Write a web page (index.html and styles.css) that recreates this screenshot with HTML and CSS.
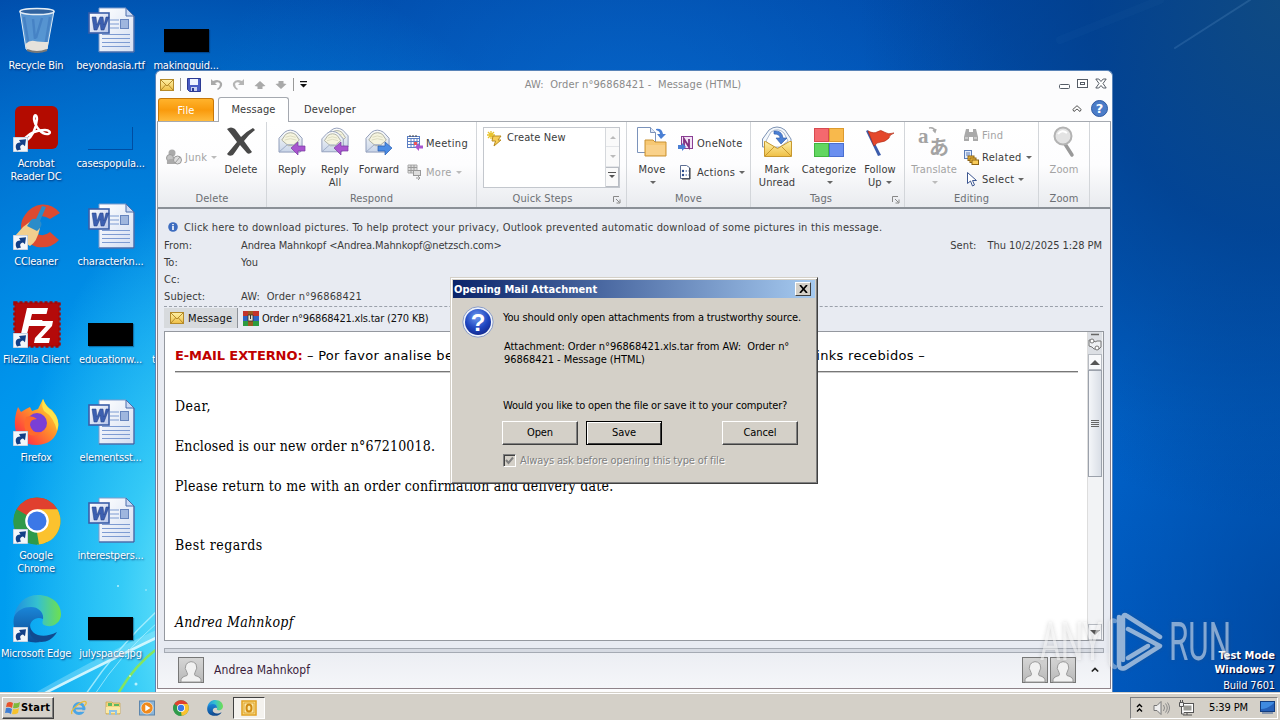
FILE: index.html
```html
<!DOCTYPE html>
<html lang="en">
<head>
<meta charset="utf-8">
<title>Desktop</title>
<link rel="stylesheet" href="styles.css">
</head>
<body>
<svg class="defs" aria-hidden="true">
  <defs>
    <linearGradient id="gPaper" x1="0" y1="0" x2="1" y2="1"><stop offset="0" stop-color="#fff"/><stop offset="1" stop-color="#d3def2"/></linearGradient>
    <linearGradient id="gW" x1="0" y1="0" x2="1" y2="1"><stop offset="0" stop-color="#fff"/><stop offset="1" stop-color="#b7c6ea"/></linearGradient>
    <linearGradient id="gEnv" x1="0" y1="0" x2="0" y2="1"><stop offset="0" stop-color="#fdfdfa"/><stop offset="1" stop-color="#c9d5e8"/></linearGradient>
    <linearGradient id="gYel" x1="0" y1="0" x2="0" y2="1"><stop offset="0" stop-color="#fdf0a8"/><stop offset="1" stop-color="#efbf45"/></linearGradient>
    <linearGradient id="gPer" x1="0" y1="0" x2="0" y2="1"><stop offset="0" stop-color="#d6d6d6"/><stop offset="1" stop-color="#b8b8b8"/></linearGradient>
    <linearGradient id="gFf" x1="1" y1="0" x2="0" y2="1"><stop offset="0" stop-color="#fff04a"/><stop offset=".4" stop-color="#ff9a2a"/><stop offset=".75" stop-color="#ff4a3a"/><stop offset="1" stop-color="#e31587"/></linearGradient>
    <linearGradient id="gEdge" x1="0" y1="0" x2="1" y2="0"><stop offset="0" stop-color="#1f8fe0"/><stop offset=".5" stop-color="#35c1cf"/><stop offset="1" stop-color="#6fe04e"/></linearGradient>
    <linearGradient id="gEdge2" x1="0" y1="0" x2="0" y2="1"><stop offset="0" stop-color="#1a86d8"/><stop offset="1" stop-color="#0d4a92"/></linearGradient>
    <radialGradient id="gQ" cx=".45" cy=".3" r=".75"><stop offset="0" stop-color="#6f9bf0"/><stop offset=".6" stop-color="#1e46c0"/><stop offset="1" stop-color="#12268a"/></radialGradient>
    <symbol id="shortcut" viewBox="0 0 15 15"><rect width="15" height="15" fill="#f2f6fa" stroke="#9db4cf"/><path d="M4 13.500C1 8 4 5 7.500 5.500L6 3l7-.8-1 7-2-1.700C7 8 6.500 10 8 12.500z" fill="#123f86"/></symbol>
    <symbol id="word" viewBox="0 0 48 48">
      <path d="M11 1h27l8 8v36H11z" fill="url(#gPaper)" stroke="#7f9ccb"/><path d="M38 1v8h8z" fill="#c9d9f4" stroke="#4c6da9"/>
      <path d="M46 9v36H11" fill="none" stroke="#35599c"/>
      <path d="M22 13h9M22 17h9M22 21h9M14 27.500h28M14 31.500h28M14 35.500h28M14 39.500h28" stroke="#7d9bd2"/>
      <rect x="32.500" y="12.500" width="8" height="9" fill="#9fb6de" stroke="#6684bd"/>
      <rect x="1" y="6" width="20" height="20" fill="url(#gW)" stroke="#3b5ea8" stroke-width="1.600"/>
      <path d="M4 10h4l1 8 3-8h3l1 8 2-8h3l-5 13h-3l-1-7-3 7H6z" fill="#3c5fb0" stroke="#203f86" stroke-width=".5"/>
    </symbol>
    <symbol id="mail" viewBox="0 0 14 12"><rect x=".5" y=".5" width="13" height="11" fill="url(#gYel)" stroke="#b58a2a"/><path d="M1 1l6 6 6-6M1 11l4.500-5M13 11L8.500 6" fill="none" stroke="#b58a2a"/></symbol>
    <symbol id="env" viewBox="0 0 28 26"><path d="M1 10L7 3.500Q13-1 20 3.500l6 6.500v12l-2 3H1z" fill="url(#gEnv)" stroke="#8a97b5"/><path d="M4 12l4-6q5.500-4 11 0l4 6-7 6h-5z" fill="#f5f4df" stroke="#a9ab9d"/><path d="M8 9q5-3 11 0M7 12q6-3 13 0" stroke="#d9d8bd" fill="none"/><path d="M1 25l9-8h6l9 7" fill="none" stroke="#9aa8c4"/></symbol>
    <symbol id="person" viewBox="0 0 26 26"><rect x=".5" y=".5" width="25" height="25" fill="url(#gPer)" stroke="#777"/><path d="M3 25q-1-5 6-6.500 1-1 0-3-3-4-1-8Q13 2 18 7q2 4-1 8.500-1 2 0 3 7 1.500 6 6.500z" fill="#f1f1f1" stroke="#999"/></symbol>
    <symbol id="chrome" viewBox="0 0 48 48"><circle cx="24" cy="24" r="23.500" fill="#2f9a4a"/><path d="M24 24L3.600 12.300A23.500 23.500 0 0 1 44.400 12.300z" fill="#e0402f"/><path d="M24 24l20.400-11.700A23.500 23.500 0 0 1 24 47.500z" fill="#fbc22e"/><path d="M24 12.300h20.400l-9 17.500L24 47.500z" fill="#fbc22e"/><path d="M3.600 12.300L14 30l10 5.500 2 12A23.500 23.500 0 0 1 3.600 12.300z" fill="#2f9a4a"/><circle cx="24" cy="24" r="11.800" fill="#fff"/><circle cx="24" cy="24" r="9.500" fill="#3b78e7"/></symbol>
    <symbol id="edge" viewBox="0 0 48 48"><path d="M1 22C3 8 13 0 25 0c14 0 23 9 23 19 0 9-8 13-14 12-5-1-5-3-4-6 1-6-4-11-11-11C9 14 3 18 1 22z" fill="url(#gEdge)"/><path d="M1 22c3-7 10-10 17-10 8 0 13 6 12 12-6-3-13 1-13 8 0 8 4 13 11 15C10 50-2 38 1 22z" fill="url(#gEdge2)"/><path d="M17 30c0 9 12 15 27 7-4 7-10 10-16 10-8-1-14-9-11-17z" fill="#114a8f"/></symbol>
    <symbol id="launch" viewBox="0 0 8 8"><path d="M.5 6V.5H6" fill="none" stroke="#888"/><path d="M3 3l3.500 3.500M7 3.500V7H3.500" fill="none" stroke="#888"/></symbol>
  </defs>
</svg>

<main class="desktop">
  <svg class="wallpaper" viewBox="0 0 1280 692" preserveAspectRatio="none" aria-hidden="true">
    <g fill="none" stroke-linecap="round">
      <path d="M40 694Q110 655 156 634" stroke="#c8f5ff" stroke-width="7" opacity=".3"/>
      <path d="M45 693Q110 660 156 638" stroke="#e4fbff" stroke-width="2.500" opacity=".85"/>
      <path d="M86 694Q115 650 158 610" stroke="#b6f2ff" stroke-width="1.500" opacity=".8"/>
      <path d="M95 694Q120 655 158 622" stroke="#b6f2ff" stroke-width="1" opacity=".7"/>
      <path d="M119 692Q135 665 158 648" stroke="#8de84e" stroke-width="2.500" opacity=".9"/>
      <path d="M1175 48L1250 0" stroke="#8cc0ee" stroke-width="2" opacity=".16"/>
      <path d="M1060 40Q1110 20 1160 0" stroke="#8cc0ee" stroke-width="8" opacity=".03"/>
    </g>
    <g fill="#d9fbff" opacity=".8"><circle cx="118" cy="586" r="1"/><circle cx="136" cy="684" r="1.500"/><circle cx="146" cy="590" r=".8"/><circle cx="130" cy="676" r="1"/></g>
  </svg>

  <div class="icons">
    <div class="cell"><svg class="ico" viewBox="0 0 48 48"><path d="M7 4l6 38q11 6 21 0l7-38z" fill="#9cc7e8" fill-opacity=".55" stroke="#dceaf5"/><path d="M11 10l5 30M37 10l-5 30M20 12l2 20M29 11l-6 20" stroke="#3a75bc" stroke-width="2.500" opacity=".55"/><path d="M12.500 37q4-4 9-3t14 1l-1 7q-11 6-21 0z" fill="#e5e2dc"/><path d="M14 43q10 4 20 0" stroke="#777" fill="none" stroke-width="2"/><ellipse cx="24" cy="4.500" rx="17" ry="3" fill="#31639f" stroke="#e4edf5" stroke-width="1.500"/></svg><span>Recycle Bin</span></div>
    <div class="cell"><svg class="ico"><use href="#word"/></svg><span>beyondasia.rtf</span></div>
    <div class="cell"><i class="thumb"></i><span>makingguid...</span></div>

    <div class="cell"><svg class="ico" viewBox="0 0 48 48"><rect x="2" y="1" width="43" height="43" rx="6" fill="#b30b00"/><path d="M13 36c6-4 10-13 11-22 0-5-3-5-3 0 1 8 8 16 14 15 4-1 1-4-3-4-7 0-15 3-20 8-3 4-1 5 1 3z" fill="none" stroke="#fff" stroke-width="2.400"/><use href="#shortcut" x="0" y="32" width="15" height="15"/></svg><span>Acrobat<br>Reader DC</span></div>
    <div class="cell"><i class="thumb ghost"></i><span>casespopula...</span></div>
    <div class="cell"></div>

    <div class="cell"><svg class="ico" viewBox="0 0 48 48"><path d="M47 10A21 21 0 0 0 12 12C4 22 8 40 24 44q14 2 22-7l-9-8q-7 6-14 1-6-6-1-13 6-7 15-1z" fill="#dc4a31"/><path d="M10 24l8-6 9 7q-3 14-10 18L2 33z" fill="#f2cf8e"/><path d="M14 23l4-6q2-2 5-1l6-13 4 1-6 14q3 3 0 7l-3 3z" fill="#2b8cc9"/><use href="#shortcut" x="0" y="32" width="15" height="15"/></svg><span>CCleaner</span></div>
    <div class="cell"><svg class="ico"><use href="#word"/></svg><span>characterkn...</span></div>
    <div class="cell"></div>

    <div class="cell"><svg class="ico" viewBox="0 0 48 48"><rect x="1.500" y="1.500" width="45" height="44" fill="#b40a0a" stroke="#a30707" stroke-width="2.500" stroke-dasharray="3 2"/><path d="M14 7h21l-1.500 6H19l-1.500 6h12L28 25H16l-3 12H7z" fill="#fff"/><path d="M24 20h16l-1 5-11 12h9l-1 5H21l1-5 11-12H23z" fill="#fff"/><use href="#shortcut" x="0" y="32" width="15" height="15"/></svg><span>FileZilla Client</span></div>
    <div class="cell"><i class="thumb"></i><span>educationw...</span></div>
    <div class="cell"><span class="tail">t</span></div>

    <div class="cell"><svg class="ico" viewBox="0 0 48 48"><path d="M5 8l3 5 5-3 4-2 2 4 6-2 5-10q3 8 9 11 8 9 6 18-3 16-21 17Q4 46 2 28 1 18 5 8z" fill="url(#gFf)"/><circle cx="24" cy="24" r="10" fill="#7a3fd6"/><path d="M13 18q6-2 11 2-7 0-7 6 2 9 12 7-7 6-14 2-6-5-2-17z" fill="#ff6a2c"/><path d="M30 0q3 8 9 12 9 9 5 20-3-14-13-20-3-5-1-12z" fill="#ffe34a"/><use href="#shortcut" x="0" y="32" width="15" height="15"/></svg><span>Firefox</span></div>
    <div class="cell"><svg class="ico"><use href="#word"/></svg><span>elementsst...</span></div>
    <div class="cell"></div>

    <div class="cell"><svg class="ico" viewBox="0 0 48 48"><use href="#chrome" width="48" height="48"/><use href="#shortcut" x="0" y="32" width="15" height="15"/></svg><span>Google<br>Chrome</span></div>
    <div class="cell"><svg class="ico"><use href="#word"/></svg><span>interestpers...</span></div>
    <div class="cell"></div>

    <div class="cell"><svg class="ico" viewBox="0 0 48 48"><use href="#edge" width="48" height="48"/><use href="#shortcut" x="0" y="32" width="15" height="15"/></svg><span>Microsoft Edge</span></div>
    <div class="cell"><i class="thumb"></i><span>julyspace.jpg</span></div>
    <div class="cell"></div>
  </div>

  <div class="build"><b>Test Mode</b><b>Windows 7</b><span>Build 7601</span></div>

  <section class="window">
    <header class="titlebar">
      <div class="qat">
        <svg width="14" height="12"><use href="#mail"/></svg>
        <i class="sep"></i>
        <svg width="14" height="14" viewBox="0 0 14 14"><path d="M.5.5h13v13h-11l-2-2z" fill="#4a5cc4" stroke="#2b3a94"/><path d="M3 1h8v6H3z" fill="#eef2ff"/><path d="M4 9h6v4H4z" fill="#c8cff0"/><path d="M5 10h2v3H5z" fill="#2b3a94"/></svg>
        <svg width="13" height="13" viewBox="0 0 13 13"><path d="M1 1v6h6L5 5q4-2 5 1 0 3-3 5l1 1q5-3 4-7-3-5-9-2z" fill="#a9a9a9"/></svg>
        <svg width="13" height="13" viewBox="0 0 13 13"><path d="M12 1v6H6l2-2Q4 3 3 6q0 3 3 5l-1 1Q0 9 1 5q3-5 9-2z" fill="#b5b5b5"/></svg>
        <svg width="12" height="10" viewBox="0 0 12 10"><path d="M6 1l5.500 5-3 .5V9h-5V6.500L.5 6z" fill="#a9a9a9"/></svg>
        <svg width="12" height="10" viewBox="0 0 12 10"><path d="M6 9l5.500-5-3-.5V1h-5v2.500L.5 4z" fill="#a9a9a9"/></svg>
        <i class="sep"></i>
        <svg width="7" height="7" viewBox="0 0 7 7"><path d="M0 0h7v1.300H0zM0 3h7L3.500 6.500z" fill="#111"/></svg>
      </div>
      <div class="title">AW:&nbsp; Order n°96868421 -&nbsp; Message (HTML)</div>
      <div class="winbtns">
        <svg width="11" height="12" viewBox="0 0 11 12"><rect x=".5" y="6.500" width="10" height="4" rx="1" fill="#fff" stroke="#555c66"/></svg>
        <svg width="11" height="12" viewBox="0 0 11 12"><rect x=".5" y="1.500" width="10" height="8" fill="#fff" stroke="#555c66"/><rect x="3.500" y="4.500" width="4" height="2" fill="#fff" stroke="#555c66"/></svg>
        <svg width="12" height="12" viewBox="0 0 12 12"><path d="M.8 1h3L6 3.500 8.200 1h3L8 5.500 11.200 10h-3L6 7.500 3.800 10h-3L4 5.500z" fill="#fff" stroke="#555c66"/></svg>
      </div>
    </header>

    <nav class="tabs">
      <span class="tab file">File</span><span class="tab active">Message</span><span class="tab">Developer</span>
      <span class="tabtools">
        <svg width="10" height="8" viewBox="0 0 10 8"><path d="M5 .7L9.200 4.500 8 6.500 5 4 2 6.500.8 4.500z" fill="#fff" stroke="#555"/></svg>
        <svg width="17" height="17" viewBox="0 0 17 17"><circle cx="8.500" cy="8.500" r="8" fill="#4b7cc8" stroke="#2f5aa2"/><text x="8.500" y="13" class="qmark">?</text></svg>
      </span>
    </nav>

    <div class="ribbon">
      <div class="group g-delete">
        <div class="tools">
          <div class="col mid"><div class="small off"><svg width="16" height="16" viewBox="0 0 16 16"><circle cx="6" cy="4" r="3.500" fill="#aaa"/><circle cx="4" cy="9" r="3.500" fill="#c4c4c4" stroke="#999"/><path d="M1 15q-1-5 4-5 4 0 4 5z" fill="#aaa"/><circle cx="11.500" cy="11" r="4" fill="#ddd" stroke="#999"/><path d="M9 14l5-6" stroke="#999"/></svg><span>Junk</span><i class="arr"></i></div></div>
          <div class="big w46"><svg width="32" height="32" viewBox="0 0 32 32"><path d="M2 3q4-3 8 0l6 8q6-6 12-9l2 2q-7 5-11 11 5 7 8 11-3 3-5 1l-7-8q-4 6-7 10-4 2-6-1 5-6 10-12Q7 9 2 3z" fill="#484848"/></svg><span>Delete</span></div>
        </div>
        <div class="cap">Delete</div>
      </div>
      <div class="group g-respond">
        <div class="tools">
          <div class="big w42"><svg width="32" height="32" viewBox="0 0 32 32"><use href="#env" x="2" y="3" width="26" height="24"/><path d="M15 22l7-6v4h7v5h-7v4z" fill="#a955cf" stroke="#7a3aa0" stroke-width=".7"/></svg><span>Reply</span></div>
          <div class="big w44"><svg width="32" height="32" viewBox="0 0 32 32"><use href="#env" x="6" y="1" width="25" height="23"/><use href="#env" x="2" y="4" width="24" height="23"/><path d="M15 22l7-6v4h7v5h-7v4z" fill="#a955cf" stroke="#7a3aa0" stroke-width=".7"/></svg><span>Reply<br>All</span></div>
          <div class="big w44"><svg width="32" height="32" viewBox="0 0 32 32"><use href="#env" x="2" y="3" width="26" height="24"/><path d="M29 22l-7-6v4h-7v5h7v4z" fill="#4b8ce4" stroke="#2a5db0" stroke-width=".7"/></svg><span>Forward</span></div>
          <div class="col two"><div class="small"><svg width="16" height="16" viewBox="0 0 16 16"><rect x=".5" y="1.500" width="12" height="11" fill="#fff" stroke="#5b7fc4"/><path d="M1 3.500h12M1 6.500h12M1 9.500h12M4 3v10M7 3v10M10 3v10" stroke="#5b7fc4"/><path d="M3 0v2M6 0v2M9 0v2" stroke="#444"/><rect x="7" y="7" width="3" height="3" fill="#e55"/><path d="M8 12l4-4v2.500h4v3h-4V16z" fill="#a955cf"/></svg><span>Meeting</span></div><div class="small off"><svg width="16" height="16" viewBox="0 0 16 16"><path d="M1 1h9v8H1z" fill="#ddd" stroke="#aaa"/><path d="M1 3.500h9M1 6.500h9M4 1v8M7 1v8" stroke="#999"/><rect x="6.500" y="6.500" width="7" height="5" fill="#ddd" stroke="#999"/><path d="M9 14h4M11 12l2 2-2 2" stroke="#999" fill="none"/></svg><span>More</span><i class="arr"></i></div></div>
        </div>
        <div class="cap">Respond</div>
      </div>
      <div class="group g-quick">
        <div class="gallery"><div class="gitem"><svg width="16" height="16" viewBox="0 0 16 16"><path d="M4 0v8M0 4h8M1 1l6 6M7 1L1 7" stroke="#e8c32c" stroke-width="1.300"/><path d="M6 5h8l-3 4h3l-7 6 1.500-5H5z" fill="#f7ce58" stroke="#b98c20"/></svg><span>Create New</span></div>
          <div class="gbar"><b><i class="up"></i></b><b><i class="dn"></i></b><b><i class="more"></i></b></div></div>
        <div class="cap">Quick Steps<svg class="launch" width="8" height="8"><use href="#launch"/></svg></div>
      </div>
      <div class="group g-move">
        <div class="tools">
          <div class="big w40"><svg width="32" height="32" viewBox="0 0 32 32"><path d="M1.500 1.500h13l5 5v20h-18z" fill="#fff" stroke="#7b93bb"/><path d="M14.500 1.500v5h5" fill="#dfe8f6" stroke="#7b93bb"/><path d="M20 3q6-1 7 5h3l-5 5-4-5h3q0-3-4-4z" fill="#4a7fd4"/><path d="M9 14h8l2 2h11v14H9z" fill="#f7c873" stroke="#c99234"/><path d="M10 19h19v10H10z" fill="#f9d18a"/></svg><span>Move</span><i class="arr"></i></div>
          <div class="col two"><div class="small"><svg width="16" height="16" viewBox="0 0 16 16"><rect x="3.500" y="1.500" width="11" height="12" fill="#f3e3f6" stroke="#8a3f94"/><path d="M6 12V4l5 8V4" fill="none" stroke="#80307f" stroke-width="1.800"/><path d="M0 10h4V8l4 4-4 4v-2H0z" fill="#4a7fd4"/></svg><span>OneNote</span></div><div class="small"><svg width="16" height="16" viewBox="0 0 16 16"><path d="M2.500 1.500h6l3 2v11h-9z" fill="#fff" stroke="#5c6f94"/><circle cx="5" cy="7" r="1.200" fill="#2a4b8d"/><circle cx="5" cy="11" r="1.200" fill="#2a4b8d"/><path d="M7.500 7h3M7.500 11h3" stroke="#2a4b8d" stroke-dasharray="1.500 1"/><path d="M12 4v11H4" stroke="#333" fill="none"/></svg><span>Actions</span><i class="arr"></i></div></div>
        </div>
        <div class="cap">Move</div>
      </div>
      <div class="group g-tags">
        <div class="tools">
          <div class="big w44"><svg width="32" height="32" viewBox="0 0 32 32"><path d="M1.500 13L8 4q8-6 16 0l6 9v8H1.500z" fill="#f4f8fc" stroke="#7e93b4"/><path d="M5 15l5-9q7-5 13 1l4 8-8 6h-8z" fill="#fff" stroke="#aebbd0"/><path d="M13 5q8-1 9 7h4l-6 6-5-6h4q0-4-6-4z" fill="#4a7fd4" stroke="#2c57a5" stroke-width=".6"/><path d="M3.500 15.500h1l12 7 12-7h2v15h-27z" fill="url(#gYel)" stroke="#c7982f"/><path d="M4 30l9-9M30 30l-9-9" stroke="#c7982f"/></svg><span>Mark<br>Unread</span></div>
          <div class="big w60"><svg width="32" height="32" viewBox="0 0 32 32"><rect x="1.500" y="2.500" width="14" height="13" fill="#f4696e" stroke="#d84a50"/><rect x="16.500" y="2.500" width="14" height="13" fill="#f8b94c" stroke="#dd9a2e"/><rect x="1.500" y="17.500" width="14" height="13" fill="#62d660" stroke="#42b440"/><rect x="16.500" y="17.500" width="14" height="13" fill="#6a8ff0" stroke="#4a6fd0"/></svg><span>Categorize</span><i class="arr"></i></div>
          <div class="big w42"><svg width="32" height="32" viewBox="0 0 32 32"><path d="M2 5l2-1 13 25-3 1z" fill="#3c5cab"/><path d="M4 5q6 3 9 1 4-3 7 0 4 3 10 1-5 2-5 5-4 4-8 4-4 0-7 4z" fill="#e4472b" stroke="#b32c16" stroke-width=".7"/></svg><span>Follow<br>Up <i class="arr inl"></i></span></div>
        </div>
        <div class="cap">Tags<svg class="launch" width="8" height="8"><use href="#launch"/></svg></div>
      </div>
      <div class="group g-edit">
        <div class="tools">
          <div class="big w52 off"><svg width="32" height="32" viewBox="0 0 32 32"><text x="0" y="17" class="tra">a</text><text x="11" y="29" class="trj">あ</text><path d="M11 2q5-1 6 3M15 4l2 2 1-3" stroke="#aaa" fill="none" stroke-width="1.500"/></svg><span>Translate</span><i class="arr"></i></div>
          <div class="col three"><div class="small off"><svg width="16" height="16" viewBox="0 0 16 16"><path d="M3 2h3v3h4V2h3l2 8v4h-5v-4H6v4H1v-4z" fill="#a9a9a9"/><path d="M2 11h3M11 11h3" stroke="#eee"/></svg><span>Find</span></div><div class="small"><svg width="16" height="16" viewBox="0 0 16 16"><rect x="1.500" y="1.500" width="7" height="8" fill="#e5eefb" stroke="#5c7db8"/><path d="M3 4h4M3 6h4" stroke="#5c7db8"/><rect x="5" y="7" width="6" height="4.500" fill="#f6bf3d" stroke="#8d6415"/><rect x="7" y="9" width="6" height="4.500" fill="#f6bf3d" stroke="#8d6415"/><rect x="9" y="11" width="6.500" height="4.500" fill="#f9cc5b" stroke="#8d6415"/></svg><span>Related</span><i class="arr"></i></div><div class="small"><svg width="16" height="16" viewBox="0 0 16 16"><path d="M4.500 1.500v11l3-2.500 2 5 2-1-2-4.500h4z" fill="#fff" stroke="#3d5690"/></svg><span>Select</span><i class="arr"></i></div></div>
        </div>
        <div class="cap">Editing</div>
      </div>
      <div class="group g-zoom">
        <div class="tools"><div class="big w50 off"><svg width="32" height="32" viewBox="0 0 32 32"><path d="M17 18l7 11" stroke="#999" stroke-width="3.500" stroke-linecap="round"/><circle cx="15" cy="10" r="8.500" fill="#e3e3e3" stroke="#b3b3b3" stroke-width="2"/><path d="M10 8q4-5 9-1" stroke="#fff" fill="none" stroke-width="2"/></svg><span>Zoom</span></div></div>
        <div class="cap">Zoom</div>
      </div>
    </div>

    <div class="mail">
      <div class="infobar"><svg width="10" height="10" viewBox="0 0 10 10"><circle cx="5" cy="5" r="4.800" fill="#3d6cbf"/><path d="M5 4v4M5 2v1.300" stroke="#fff" stroke-width="1.600"/></svg><span>Click here to download pictures. To help protect your privacy, Outlook prevented automatic download of some pictures in this message.</span></div>
      <div class="fields">
        <span>From:</span><div class="fromrow"><span class="addr">Andrea Mahnkopf &lt;Andrea.Mahnkopf@netzsch.com&gt;</span><span class="sent">Sent:</span><span class="date">Thu 10/2/2025 1:28 PM</span></div>
        <span>To:</span><span>You</span>
        <span>Cc:</span><span></span>
        <span>Subject:</span><span class="subj">AW:&nbsp; Order n°96868421</span>
      </div>
      <div class="attach">
        <div class="amsg"><svg width="14" height="12"><use href="#mail"/></svg><span>Message</span></div>
        <div class="afile"><svg width="16" height="15" viewBox="0 0 16 15"><path d="M0 0h16v5H0z" fill="#c2332c"/><path d="M0 5h16v5H0z" fill="#2e63c4"/><path d="M0 10h16v5H0z" fill="#2d9b40"/><path d="M5 0h5v15H5z" fill="#9c5a20"/><path d="M5 4h5v6H5z" fill="#e8e2cf" stroke="#333" stroke-width=".8"/><path d="M7.500 4v4" stroke="#333"/></svg><span>Order n°96868421.xls.tar (270 KB)</span></div>
      </div>
      <div class="bodybox">
        <article class="letter">
          <div class="warn"><span><b>E-MAIL EXTERNO:</b> – Por favor analise bem</span><span>os links recebidos –</span></div>
          <p class="p1">Dear,</p>
          <p class="p2">Enclosed is our new order n°67210018.</p>
          <p class="p3">Please return to me with an order confirmation and delivery date.</p>
          <p class="p4">Best regards</p>
          <p class="p5">Andrea Mahnkopf</p>
        </article>
        <aside class="scroll">
          <div class="shead"><svg width="14" height="20" viewBox="0 0 14 20"><path d="M3 2.500h8" stroke="#666" stroke-width="1.500"/><path d="M1 8h4l2 2 2-1h4v6l-2 2H6l-2-2-3-1z" fill="#eef0f3" stroke="#777"/><circle cx="4" cy="9" r="2" fill="#fff" stroke="#777"/><circle cx="9" cy="16" r="2" fill="#fff" stroke="#777"/></svg></div>
          <div class="sbtn"><i class="up"></i></div>
          <div class="sthumb"><i></i><i></i><i></i><i></i></div>
          <div class="strack"></div>
          <div class="sbtn"><i class="dn"></i></div>
        </aside>
      </div>
      <div class="splitter"></div>
      <div class="people">
        <svg width="26" height="26"><use href="#person"/></svg><span>Andrea Mahnkopf</span>
        <svg class="pr" width="26" height="26"><use href="#person"/></svg><svg width="26" height="26"><use href="#person"/></svg>
        <svg class="chev" width="8" height="6" viewBox="0 0 8 6"><path d="M.8 4.500L4 1.500l3.200 3" stroke="#222" stroke-width="1.700" fill="none"/></svg>
      </div>
    </div>
  </section>

  <section class="dialog">
    <header><b>Opening Mail Attachment</b><span class="close"><svg width="9" height="8" viewBox="0 0 9 8"><path d="M1 0l7 8M8 0L1 8" stroke="#000" stroke-width="1.700"/></svg></span></header>
    <div class="dbody">
      <svg class="q" width="32" height="32" viewBox="0 0 32 32"><circle cx="16" cy="16" r="15.200" fill="#eef2fa" stroke="#8b9cc4"/><circle cx="16" cy="16" r="13" fill="url(#gQ)"/><text x="16" y="25" class="bigq">?</text></svg>
      <div class="dtext">
        <p class="d1">You should only open attachments from a trustworthy source.</p>
        <p class="d2">Attachment: Order n°96868421.xls.tar from AW:&nbsp; Order n°<br>96868421 - Message (HTML)</p>
        <p class="d3">Would you like to open the file or save it to your computer?</p>
        <div class="btns"><span class="btn">Open</span><span class="btn def">Save</span><span class="btn last">Cancel</span></div>
        <div class="check"><span class="box"><svg width="9" height="9" viewBox="0 0 9 9"><path d="M1 4l2.500 3L8 1.500" stroke="#808080" stroke-width="2" fill="none"/></svg></span><span>Always ask before opening this type of file</span></div>
      </div>
    </div>
  </section>

  <svg class="mark" viewBox="0 0 200 70" width="200" height="70">
    <g class="marktext"><text x="5" y="52" textLength="62" lengthAdjust="spacingAndGlyphs">ANY</text><text x="134" y="52" textLength="62" lengthAdjust="spacingAndGlyphs">RUN</text></g>
    <g fill="none" stroke="#fff" stroke-linejoin="round" stroke-linecap="round" stroke-width="4.500" opacity=".55"><path d="M125 29L92 8q-4-3-4 3v41"/><path d="M93 21l32 17-35 22q-6 2-6-4V9"/><path d="M93 50l20-12"/><path d="M80 13q-4-2-4 4v36q0 5 4 6" opacity=".7"/></g>
  </svg>
</main>

<footer class="taskbar">
  <div class="start"><svg width="15" height="14" viewBox="0 0 15 14"><path d="M2 2q3-2 6 0L7 7Q4 5 1 6z" fill="#e8532b"/><path d="M9 2q3 1 6-1l-1 5q-3 2-6 1z" fill="#7fb93a"/><path d="M1 7q3-1 6 1l-1 5q-3-2-6-1z" fill="#3f7fd4"/><path d="M8 8q3 1 6-1l-1 5q-3 2-6 1z" fill="#f6c22c"/></svg><b>Start</b></div>
  <div class="pins">
    <svg viewBox="0 0 16 16"><circle cx="8" cy="8.500" r="5" fill="none" stroke="#4aa5e6" stroke-width="3"/><path d="M4 8.500h9" stroke="#4aa5e6" stroke-width="2"/><path d="M10 11h5" stroke="#d4d0c8" stroke-width="1.500"/><path d="M1 14Q-1 11 6 5.500T15 2q1 2-2 4" fill="none" stroke="#e8bc3a" stroke-width="1.300"/></svg>
    <svg viewBox="0 0 16 16"><path d="M1 2h6l1 1h7v11H1z" fill="#f2d680" stroke="#c9a448" stroke-width=".7"/><path d="M3 3h4v3H3zM9 4h5v2H9z" fill="#5fb860"/><path d="M1 7h14v6H1z" fill="#fbe9a6"/><path d="M4 15v-5h8v5h-2v-3H6v3z" fill="#8fc3e4"/></svg>
    <svg viewBox="0 0 16 16"><rect x=".5" y="1" width="15" height="14" fill="#8bb5d8" stroke="#5d86ad"/><circle cx="8" cy="8" r="6" fill="#f08a1c" stroke="#fff" stroke-width=".6"/><path d="M6.300 4.800v6.400L11.500 8z" fill="#fff"/></svg>
    <svg viewBox="0 0 48 48"><use href="#chrome" width="48" height="48"/></svg>
    <svg viewBox="0 0 48 48"><use href="#edge" width="48" height="48"/></svg>
  </div>
  <div class="running"><svg width="16" height="16" viewBox="0 0 16 16"><rect x="1" y="1" width="14" height="14" fill="#fbe08a" stroke="#e0a020" stroke-width="1.500"/><rect x="3" y="3" width="10" height="10" fill="#fbe9a8" stroke="#d18a10" stroke-width=".7"/><ellipse cx="8" cy="8" rx="2.500" ry="3.500" fill="none" stroke="#d08a10" stroke-width="2"/></svg></div>
  <div class="tray">
    <svg width="7" height="10" viewBox="0 0 7 10"><path d="M1 4l2.500-2.500L6 4M1 8.500L3.500 6 6 8.500" stroke="#000" stroke-width="1.400" fill="none"/></svg>
    <svg class="vol" width="17" height="16" viewBox="0 0 17 16"><path d="M1 5.500h3l4-4v13l-4-4H1z" fill="#eee" stroke="#777"/><path d="M10.500 5q2 3 0 6M12.500 3.500q3.500 4.500 0 9M14.500 2.500q4 5.500 0 11" fill="none" stroke="#888"/></svg>
    <svg class="net" width="16" height="16" viewBox="0 0 16 16"><rect x="3.500" y="3.500" width="12" height="9" fill="#fff" stroke="#555"/><rect x="5.500" y="5.500" width="8" height="5" fill="#9a9a94"/><path d="M5 15h9M9 13v2" stroke="#555"/><path d="M1.500 2.500h4v4h-4zM2.500 0v2M4.500 0v2M3.500 7v7h3" fill="#eee" stroke="#555"/></svg>
    <span>5:39 PM</span>
    <svg class="desk" width="15" height="13" viewBox="0 0 15 13"><rect x=".5" y=".5" width="14" height="10" fill="#2560b8" stroke="#123d80"/><path d="M1 8q7 0 13-6V1H1z" fill="#3f8ae0"/><path d="M2 12h11" stroke="#3a5f96"/></svg>
  </div>
</footer>
</body>
</html>
```
FILE: styles.css
```css
* { box-sizing: border-box; }
html, body { margin: 0; height: 720px; overflow: hidden; }
body {
  display: grid; grid-template-rows: 692px 28px; width: 1280px;
  font-family: "DejaVu Sans Condensed", "DejaVu Sans", "Liberation Sans", sans-serif;
  font-stretch: condensed; font-size: 11px; line-height: 13px; color: #000; letter-spacing: -.13px;
}
p { margin: 0; }
i { font-style: normal; }
svg { display: block; flex: none; }
.defs { position: absolute; width: 0; height: 0; }

/* desktop */
.desktop {
  position: relative; overflow: hidden;
  background:
    radial-gradient(ellipse 210px 420px at 215px 610px, rgba(130,238,250,1), rgba(70,215,248,.75) 45%, rgba(0,170,245,0) 100%),
    radial-gradient(ellipse 560px 720px at 160px 660px, #00acf6 0%, rgba(0,155,240,.9) 45%, rgba(0,110,215,0) 100%),
    radial-gradient(ellipse 420px 520px at 1280px 0, rgba(16,74,128,.95), rgba(3,62,136,.75) 45%, rgba(0,80,180,0) 100%),
    radial-gradient(ellipse 240px 420px at 1300px 640px, rgba(0,66,150,.75), rgba(0,80,180,0) 100%),
    radial-gradient(ellipse 420px 300px at 620px 140px, rgba(10,115,215,.6), rgba(0,90,200,0) 100%),
    linear-gradient(#0049a8 0, #0056bb 20%, #0064cc 60%, #005cc4 100%);
}
.wallpaper { position: absolute; inset: 0; width: 1280px; height: 692px; }
.icons { position: absolute; left: 0; top: 0; display: grid; grid-template-columns: 72px 77px 74px; grid-auto-rows: 98px; }
.cell { display: flex; flex-direction: column; align-items: center; padding-top: 7px; color: #fff; text-align: center; text-shadow: 1px 1px 2px rgba(0,20,80,.8); white-space: nowrap; letter-spacing: -.2px; }
.ico { width: 48px; height: 48px; margin-bottom: 4px; margin-left: 2px; }
.thumb { width: 45px; height: 23px; margin: 22px 0 7px; background: #000; box-shadow: 1px 1px 1px rgba(0,30,70,.4); }
.ghost { background: none; border: solid rgba(0,60,140,.7); border-width: 0 1px 1px 0; box-shadow: none; }
.tail { margin: 52px 0 0 3px; align-self: flex-start; }
.build { position: absolute; right: 5px; top: 649px; display: flex; flex-direction: column; align-items: flex-end; color: #fff; line-height: 15px; text-shadow: 1px 1px 1px #003; }
.build b { line-height: 14px; letter-spacing: 0; }
.build span { margin-top: 1px; }

/* message window */
.window {
  position: absolute; left: 155px; top: 70px; width: 958px; height: 622px;
  border: 1px solid #5a84b8; border-bottom: 0; border-radius: 6px 6px 0 0; background: #fcfcfd;
  padding: 0 1px; letter-spacing: .1px; color: #3b3b3b;
}
.titlebar { height: 27px; display: grid; grid-template-columns: 340px 1fr 342px; align-items: center; }
.qat { display: flex; align-items: center; padding-left: 3px; gap: 8px; }
.qat .sep { width: 1px; height: 13px; background: #999; margin: 0 -2px; }
.qat .sep + svg { margin-left: 0; }
.qat svg + svg { margin-left: 1px; }
.title { text-align: center; color: #8a8a8a; white-space: nowrap; }
.winbtns { display: flex; gap: 7px; justify-content: flex-end; padding-right: 4px; margin-top: -2px; }
.tabs { height: 24px; display: flex; align-items: flex-end; border-bottom: 1px solid #a5a9b0; }
.tab { height: 23px; line-height: 23px; padding: 0 15px; }
.tab.file { width: 56px; text-align: center; color: #fff; padding: 0; border: 1px solid #c77709; border-bottom: 0; border-radius: 3px 3px 0 0; background: linear-gradient(#ffb32c, #f99a0c 50%, #ffbb3d); margin: 0 4px 0 1px; height: 23px; }
.tab.active { width: 71px; padding: 0; text-align: center; background: #fff; border: 1px solid #a5a9b0; border-bottom: 0; border-radius: 3px 3px 0 0; height: 25px; margin-bottom: -1px; }
.tabtools { margin-left: auto; display: flex; align-items: center; gap: 9px; padding: 0 3px 4px 0; }
.qmark { font: bold 13px "DejaVu Sans", sans-serif; fill: #fff; text-anchor: middle; }

.ribbon { height: 87px; display: flex; border: 1px solid #9a9ea6; border-width: 0 1px 2px; border-bottom-color: #8b9097; background: linear-gradient(#fff, #fdfdfe 50%, #e9ebef); }
.group { display: flex; flex-direction: column; border-right: 1px solid #d3d6da; }
.tools { display: flex; height: 70px; padding-top: 4px; }
.cap { position: relative; height: 15px; line-height: 14px; text-align: center; color: #6c6f74; }
.launch { position: absolute; right: 4px; top: 4px; }
.g-delete { width: 109px; }
.g-respond { width: 210px; } .g-respond .tools { padding-left: 4px; }
.g-quick { width: 150px; padding: 5px 0 0 6px; }
.g-quick .cap { margin-left: -24px; } .g-quick .launch { right: 5px; }
.g-move { width: 124px; } .g-move .tools { padding-left: 5px; }
.g-tags { width: 154px; } .g-tags .cap { padding-right: 13px; } .g-tags .tools { padding-left: 4px; }
.g-edit { width: 134px; } .g-edit .tools { padding-left: 3px; }
.g-zoom { width: 51px; }
.big { display: flex; flex-direction: column; align-items: center; text-align: center; line-height: 13px; white-space: nowrap; }
.big > span { margin-top: 5px; }
.w40 { width: 40px; } .w42 { width: 42px; } .w44 { width: 44px; } .w46 { width: 46px; } .w50 { width: 50px; } .w52 { width: 52px; } .w60 { width: 60px; }
.col { display: flex; flex-direction: column; padding-left: 6px; letter-spacing: .3px; }
.mid { width: 60px; padding: 23px 0 0 8px; }
.two { padding-top: 9px; gap: 13px; }
.three { padding: 1px 0 0 3px; gap: 6px; }
.small { display: flex; align-items: center; height: 16px; gap: 3px; white-space: nowrap; }
.off { color: #a3a3a3; }
.arr { width: 0; height: 0; border: 3px solid transparent; border-top-color: #666; border-bottom: 0; margin-left: 1px; }
.big > .arr { margin-top: 5px; }
.off .arr { border-top-color: #bbb; }
.inl { display: inline-block; vertical-align: 2px; }
.tra { font: bold 21px "Liberation Serif", serif; fill: #a3a3a3; }
.trj { font: bold 20px "Noto Sans CJK JP", sans-serif; fill: #a3a3a3; }
.gallery { display: flex; justify-content: space-between; width: 137px; height: 61px; border: 1px solid #c3c7cd; background: #fff; margin-bottom: 4px; }
.gitem { display: flex; gap: 4px; padding: 3px 0 0 3px; }
.gbar { width: 14px; display: grid; border-left: 1px solid #d5d8dc; background: #fafafa; }
.gbar b { display: grid; place-items: center; border-bottom: 1px solid #e3e5e8; }
.gbar b:last-child { border: 1px solid #b9bdc4; border-left: 0; }
.up, .dn, .more { border: 3px solid transparent; width: 0; height: 0; }
.up { border-bottom-color: #bbb; border-top: 0; }
.dn, .more { border-top-color: #bbb; border-bottom: 0; }
.gbar .more { border-top-color: #555; position: relative; }
.more::before { content: ""; position: absolute; left: -4px; top: -6px; width: 8px; height: 1px; background: #555; }

/* mail header and body */
.mail { height: 480px; border: 1px solid #8f8389; border-top: 0; background: #e8ebf2; padding: 10px 5px 0 6px; display: flex; flex-direction: column; }
.infobar { display: flex; align-items: center; gap: 6px; padding-left: 4px; height: 16px; white-space: nowrap; letter-spacing: .19px; }
.fields { display: grid; grid-template-columns: 77px 1fr; grid-auto-rows: 17px; align-items: center; padding-top: 2px; height: 72px; margin-right: 2px; white-space: nowrap; letter-spacing: .1px; border-bottom: 1px dashed #9aa0aa; }
.fromrow { display: flex; padding-right: 1px; }
.addr { letter-spacing: -.11px; } .subj { letter-spacing: .15px; }
.date { letter-spacing: -.05px; }
.sent { margin-left: auto; margin-right: 11px; }
.attach { display: flex; height: 24px; padding-top: 1px; color: #111; letter-spacing: -.2px; white-space: nowrap; }
.amsg { display: flex; align-items: center; gap: 4px; width: 74px; height: 20px; padding-left: 6px; background: #d7dadd; border-right: 1px solid #8e939a; letter-spacing: .1px; }
.afile { display: flex; align-items: center; gap: 3px; height: 20px; padding-left: 5px; }
.bodybox { height: 310px; width: 940px; display: flex; justify-content: space-between; border: 1px solid #94989f; background: #fff; color: #000; }
.letter { padding-left: 10px; width: 913px; font-family: "DejaVu Serif Condensed", "DejaVu Serif", serif; font-size: 14px; line-height: 20px; white-space: nowrap; letter-spacing: .16px; }
.warn { display: flex; justify-content: space-between; height: 40px; padding: 14px 153px 0 0; border-bottom: 1px solid #777; box-shadow: 0 1px #ccc; font-family: "DejaVu Sans", sans-serif; font-stretch: normal; font-size: 13px; letter-spacing: .3px; }
.warn b { color: #c00000; letter-spacing: -.08px; }
.p1 { margin-top: 24px; letter-spacing: .5px; } .p2, .p3 { margin-top: 20px; } .p3 { letter-spacing: .26px; } .p4 { margin-top: 39px; letter-spacing: .5px; } .p5 { margin-top: 57px; font-style: italic; letter-spacing: .25px; }
.scroll { width: 16px; display: flex; flex-direction: column; background: #f2f3f5; border-left: 1px solid #ddd; padding-right: 1px; }
.shead { height: 22px; background: #dcdfe4; }
.sbtn { height: 16px; border: 1px solid #b6bac1; background: #f8f9fb; display: grid; place-items: center; }
.sbtn .up { border-width: 0 5px 5px; border-bottom-color: #555; }
.sbtn .dn { border-width: 5px 5px 0; border-top-color: #555; }
.sthumb { height: 107px; border: 1px solid #9ba1ab; background: linear-gradient(90deg, #f4f6f9, #d9dee6); display: flex; flex-direction: column; align-items: center; justify-content: center; gap: 1px; }
.sthumb i { width: 8px; height: 1px; background: #666; }
.strack { flex: 1; }
.splitter { height: 5px; width: 940px; margin-top: 7px; border: 1px solid #a5aab3; background: #d6dae2; }
.people { flex: 1; margin: 0 -5px 0 -6px; background: linear-gradient(#eceef3, #f5f6f9); display: flex; align-items: center; padding: 0 11px 1px 20px; color: #3a1c3a; }
.people span { margin-left: 10px; font-size: 12px; }
.people .pr { margin-left: auto; margin-right: 2px; }
.chev { margin-left: 15px; }

/* dialog */
.dialog { position: absolute; left: 450px; top: 277px; width: 368px; height: 207px; padding: 2px; background: #d4d0c8; border: 1px solid; border-color: #d4d0c8 #404040 #404040 #d4d0c8; box-shadow: inset 1px 1px #fff, inset -1px -1px #808080; }
.dialog header { height: 18px; display: flex; justify-content: space-between; align-items: center; padding: 0 4px 0 1px; color: #fff; background: linear-gradient(90deg, #0a246a, #a6caf0); letter-spacing: .03px; }
.close { width: 16px; height: 14px; display: grid; place-items: center; background: #d4d0c8; border: 1px solid; border-color: #fff #404040 #404040 #fff; }
.dbody { display: flex; }
.q { margin: 8px 8px 0 9px; }
.bigq { font: bold 24px "Liberation Sans", sans-serif; fill: #fff; text-anchor: middle; }
.dtext { padding-top: 13px; white-space: nowrap; }
.d1 { padding-left: 1px; }
.d2 { margin: 16px 0 0 2px; letter-spacing: -.05px; } .d3 { margin-top: 33px; letter-spacing: -.17px; padding-left: 1px; }
.btns { display: flex; gap: 8px; margin-top: 9px; }
.btn { width: 76px; height: 24px; line-height: 22px; text-align: center; border: 1px solid; border-color: #fff #404040 #404040 #fff; box-shadow: inset -1px -1px #808080; letter-spacing: -.1px; }
.btn.def { border-color: #000; box-shadow: inset 1px 1px #fff, inset -1px -1px #404040; }
.btn.last { margin-left: 52px; }
.check { display: flex; align-items: center; gap: 4px; margin-top: 9px; padding-left: 1px; color: #808080; text-shadow: 1px 1px #fff; }
.box { width: 13px; height: 13px; display: grid; place-items: center; border: 1px solid; border-color: #808080 #fff #fff #808080; box-shadow: inset 1px 1px #404040; }

/* watermark */
.mark { position: absolute; left: 1035px; top: 608px; overflow: visible; filter: drop-shadow(0 0 2px rgba(80,80,80,.45)); }
.marktext { font: 400 53px/1 Roboto, "Liberation Sans", sans-serif; letter-spacing: 0; fill: #fff; opacity: .5; }

/* taskbar */
.taskbar { display: flex; align-items: center; background: #d4d0c8; border-top: 1px solid #d4d0c8; box-shadow: inset 0 1px #fff; padding: 3px 2px 1px; }
.start { display: flex; align-items: center; gap: 1px; width: 52px; height: 22px; padding-left: 2px; border: 1px solid; border-color: #fff #404040 #404040 #fff; box-shadow: inset -1px -1px #808080; letter-spacing: .2px; }
.pins { display: flex; gap: 18px; margin-left: 17px; }
.pins svg { width: 16px; height: 16px; }
.running { margin-left: 10px; width: 32px; height: 22px; display: grid; place-items: center; border: 1px solid; border-color: #404040 #fff #fff #404040; background: #f4f2ee; }
.tray { margin-left: auto; width: 148px; height: 22px; display: flex; align-items: center; padding-left: 5px; border: 1px solid; border-color: #808080 #fff #fff #808080; white-space: nowrap; }
.vol { margin-left: 10px; } .net { margin-left: 8px; }
.tray span { margin-left: 15px; } .desk { margin-left: auto; margin-right: 2px; }
```
